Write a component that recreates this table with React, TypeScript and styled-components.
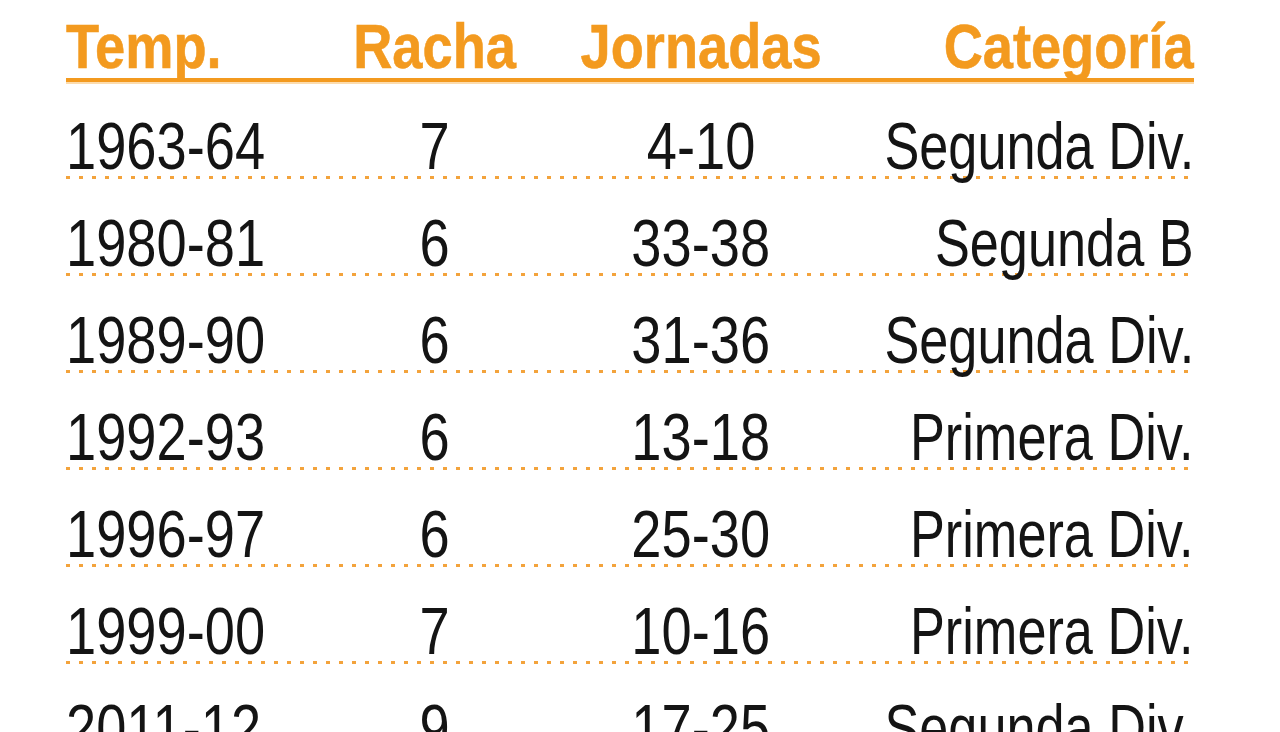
import React from "react";
import styled, { createGlobalStyle } from "styled-components";

const Global = createGlobalStyle`
  html, body {
    margin: 0;
    padding: 0;
    background: #ffffff;
    height: 732px;
    overflow: hidden;
  }
`;

const Page = styled.div`
  padding: 0 86px 0 66px;
  width: 1128px;
`;

const columns = "250px 238px 294px minmax(0, 1fr)";

const HeaderRow = styled.div`
  display: grid;
  grid-template-columns: ${columns};
  align-items: end;
  height: 77px;
  padding-bottom: 1px;
  border-bottom: 4px solid #f39a1f;
  box-shadow: 0 2px 0 #fcdcae;
`;

const Row = styled.div`
  display: grid;
  grid-template-columns: ${columns};
  align-items: end;
  height: 97px;
  box-sizing: border-box;
  background-image: repeating-linear-gradient(
    to right,
    #f3a33c 0px,
    #f3a33c 4px,
    rgba(255, 255, 255, 0) 4px,
    rgba(255, 255, 255, 0) 13px
  );
  background-size: 100% 3px;
  background-position: left bottom;
  background-repeat: no-repeat;
`;

type Align = "left" | "center" | "right";

const justify = (a: Align) => (a === "left" ? "flex-start" : a === "right" ? "flex-end" : "center");

const HeadCell = styled.div<{ $align: Align }>`
  display: flex;
  justify-content: ${(p) => justify(p.$align)};
  min-width: 0;
  font-family: "Liberation Sans", Arial, sans-serif;
  font-weight: 700;
  font-size: 63px;
  line-height: 62px;
  color: #f39a1f;
  white-space: nowrap;
  -webkit-text-stroke: 0.6px #f39a1f;
`;

const Cell = styled.div<{ $align: Align }>`
  display: flex;
  justify-content: ${(p) => justify(p.$align)};
  min-width: 0;
  font-family: "Liberation Sans", Arial, sans-serif;
  font-weight: 400;
  font-size: 67px;
  line-height: 66px;
  color: #141414;
  white-space: nowrap;
`;

const Narrow = styled.span<{ $align: Align; $scale: number }>`
  display: inline-block;
  flex: none;
  transform: scaleX(${(p) => p.$scale});
  transform-origin: ${(p) => (p.$align === "center" ? "center" : p.$align)} center;
`;

const rows: [string, string, string, string][] = [
  ["1963-64", "7", "4-10", "Segunda Div."],
  ["1980-81", "6", "33-38", "Segunda B"],
  ["1989-90", "6", "31-36", "Segunda Div."],
  ["1992-93", "6", "13-18", "Primera Div."],
  ["1996-97", "6", "25-30", "Primera Div."],
  ["1999-00", "7", "10-16", "Primera Div."],
  ["2011-12", "9", "17-25", "Segunda Div."],
];

const aligns: Align[] = ["left", "center", "center", "right"];
const heads = ["Temp.", "Racha", "Jornadas", "Categoría"];

export default function App() {
  return (
    <>
      <Global />
      <Page>
        <HeaderRow>
          {heads.map((h, i) => (
            <HeadCell key={h} $align={aligns[i]}>
              <Narrow $align={aligns[i]} $scale={0.86}>
                {h}
              </Narrow>
            </HeadCell>
          ))}
        </HeaderRow>
        {rows.map((r) => (
          <Row key={r[0]}>
            {r.map((v, i) => (
              <Cell key={i} $align={aligns[i]}>
                <Narrow $align={aligns[i]} $scale={i === 3 ? 0.78 : 0.81}>
                  {v}
                </Narrow>
              </Cell>
            ))}
          </Row>
        ))}
      </Page>
    </>
  );
}
